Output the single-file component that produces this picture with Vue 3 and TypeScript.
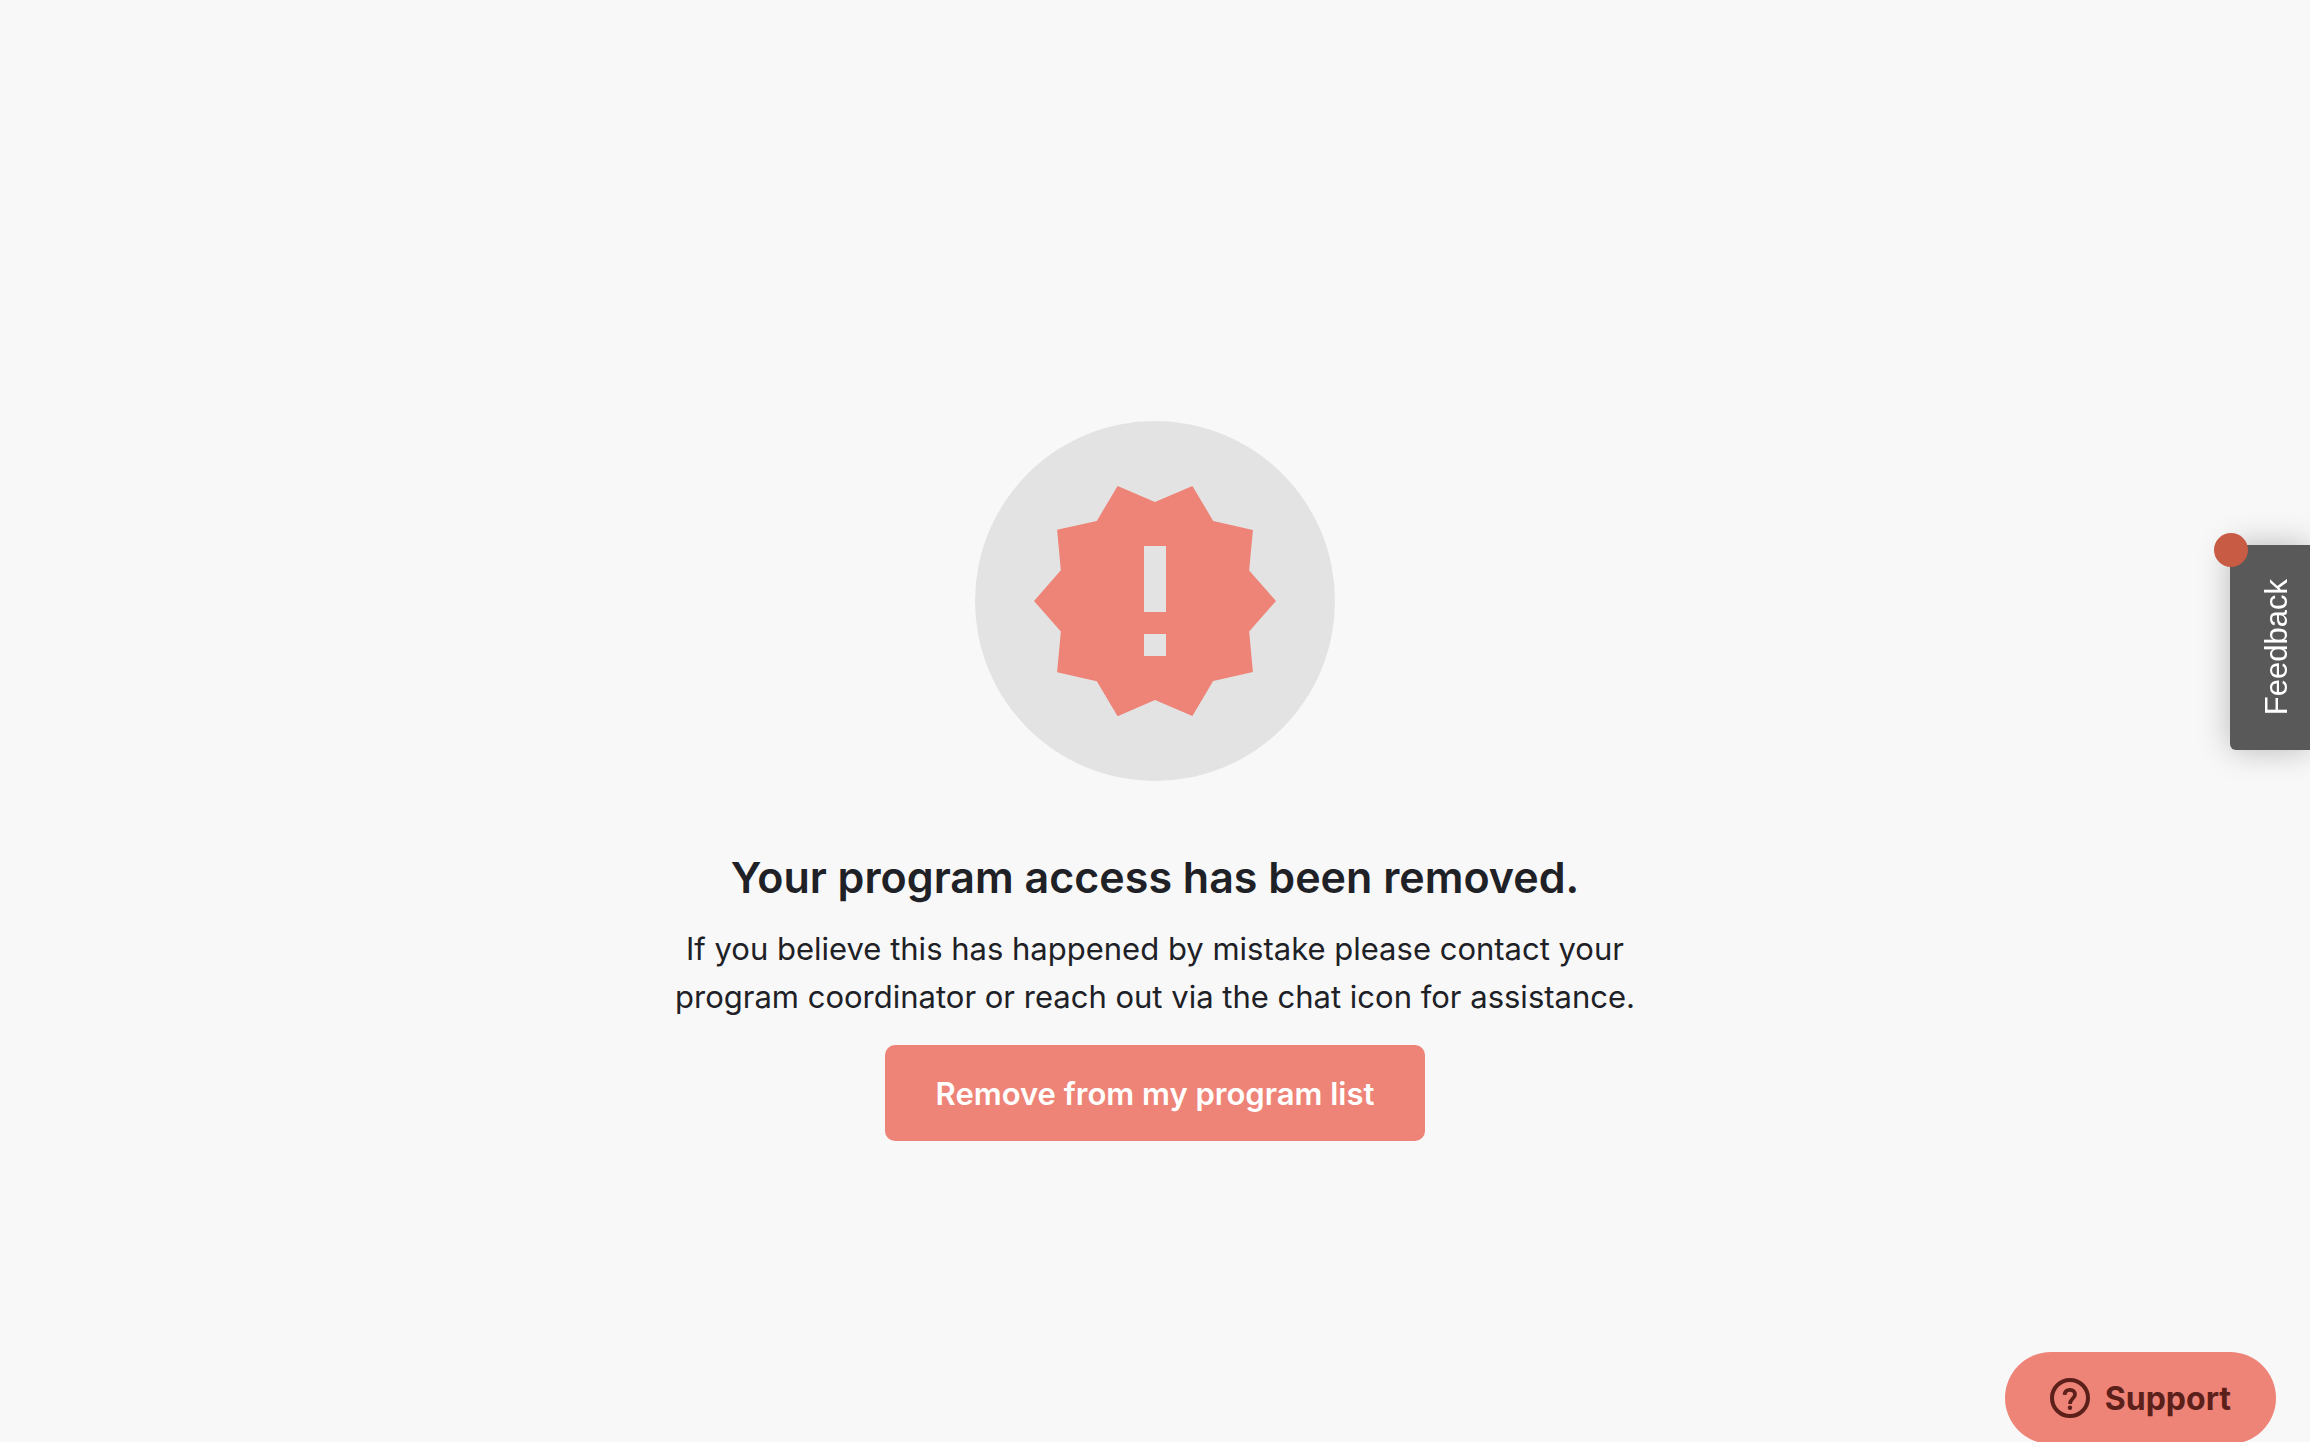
<script setup lang="ts">
const title = 'Your program access has been removed.'
</script>

<template>
  <div class="page">
    <main class="notice">
      <div class="badge">
        <svg class="badge-icon" viewBox="0 0 24 24" aria-hidden="true">
          <path
            d="M23 12l-2.44-2.78.34-3.68-3.61-.82-1.89-3.18L12 3 8.6 1.54 6.71 4.72l-3.61.81.34 3.68L1 12l2.44 2.78-.34 3.69 3.61.82 1.89 3.18L12 21l3.4 1.46 1.89-3.18 3.61-.82-.34-3.68L23 12zm-10 5h-2v-2h2v2zm0-4h-2V7h2v6z"
          />
        </svg>
      </div>
      <h1 class="title">{{ title }}</h1>
      <p class="message">
        If you believe this has happened by mistake please contact your<br />
        program coordinator or reach out via the chat icon for assistance.
      </p>
      <button type="button" class="remove">Remove from my program list</button>
    </main>

    <button type="button" class="feedback">
      <span class="feedback-dot"></span>
      <span class="feedback-label">Feedback</span>
    </button>

    <button type="button" class="support">
      <svg class="support-icon" viewBox="0 0 40 40" aria-hidden="true">
        <circle cx="20" cy="20" r="18" fill="none" stroke="currentColor" stroke-width="4" />
        <path
          d="M14.6 16.8C14.8 13.4 17 11.8 20 11.8C23 11.8 25 13.6 25 16.4C25 20.4 20 20.8 20 26"
          fill="none"
          stroke="currentColor"
          stroke-width="3.8"
        />
        <circle cx="20" cy="29.8" r="2.2" fill="currentColor" />
      </svg>
      <span>Support</span>
    </button>
  </div>
</template>

<style>
body {
  background: #f8f8f8;
}
</style>

<style scoped>
.page {
  box-sizing: border-box;
  min-height: 100vh;
  padding-top: 120px;
  display: flex;
  align-items: center;
  justify-content: center;
  overflow: hidden;
  background: #f8f8f8;
  color: #202126;
  font-family: Inter, "Noto Sans", sans-serif;
}

.notice {
  display: flex;
  flex-direction: column;
  align-items: center;
  text-align: center;
}

.badge {
  display: flex;
  align-items: center;
  justify-content: center;
  width: 360px;
  height: 360px;
  border-radius: 50%;
  background: #e3e3e3;
}

.badge-icon {
  width: 264px;
  height: 264px;
  fill: #ee8377;
}

.title {
  margin: 68px 0 0;
  font-size: 43px;
  line-height: 56px;
  font-weight: 600;
}

.message {
  margin: 20px 0 0;
  font-size: 31px;
  line-height: 48px;
}

.remove {
  margin-top: 24px;
  height: 96px;
  padding: 0 51px;
  border: 0;
  border-radius: 10px;
  background: #ee8377;
  color: #fff;
  font: inherit;
  font-size: 31px;
  font-weight: 600;
}

.feedback {
  position: fixed;
  right: 0;
  top: 545px;
  display: flex;
  align-items: center;
  justify-content: center;
  width: 80px;
  height: 205px;
  padding: 0 0 0 14px;
  border: 0;
  border-radius: 6px 0 0 6px;
  background: #595959;
  box-shadow: 0 0 32px rgba(0, 0, 0, 0.26);
  color: #fff;
  font-family: "Liberation Sans", Arial, sans-serif;
  font-size: 31px;
  line-height: 36px;
}

.feedback-label {
  writing-mode: vertical-rl;
  transform: rotate(180deg);
}

.feedback-dot {
  position: absolute;
  left: -16px;
  top: -12px;
  width: 34px;
  height: 34px;
  border-radius: 50%;
  background: #c75b43;
}

.support {
  position: fixed;
  right: 34px;
  bottom: -2px;
  display: flex;
  align-items: center;
  gap: 15px;
  height: 92px;
  padding: 0 45px;
  border: 0;
  border-radius: 46px;
  background: #ee8377;
  color: #5b201a;
  font: inherit;
  font-size: 32px;
  font-weight: 700;
}

.support-icon {
  width: 40px;
  height: 40px;
}
</style>
